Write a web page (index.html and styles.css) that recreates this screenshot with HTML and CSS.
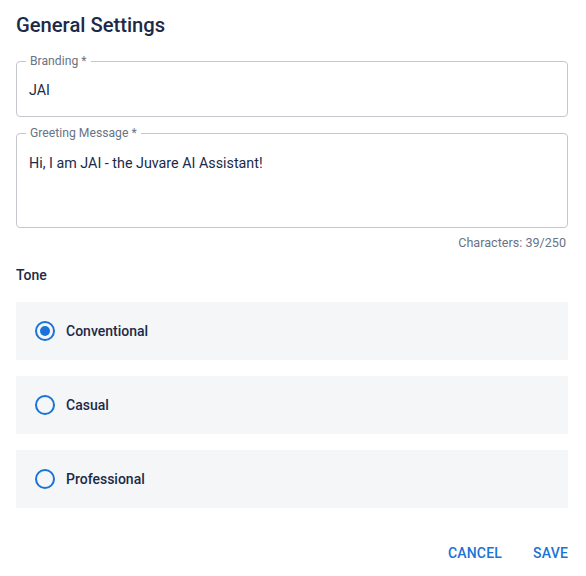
FILE: index.html
```html
<!DOCTYPE html>
<html>
<head>
<meta charset="utf-8">
<link rel="stylesheet" href="styles.css">
</head>
<body>
<div class="page">
  <h1 class="title">General Settings</h1>
  <fieldset class="field field-branding">
    <legend class="legend">Branding *</legend>
    <div class="value">JAI</div>
  </fieldset>
  <fieldset class="field field-greeting">
    <legend class="legend">Greeting Message *</legend>
    <div class="value">Hi, I am JAI - the Juvare AI Assistant!</div>
  </fieldset>
  <div class="counter">Characters: 39/250</div>
  <div class="tone-label">Tone</div>
  <div class="options">
    <div class="option"><span class="radio checked"></span><span class="opt-text">Conventional</span></div>
    <div class="option"><span class="radio"></span><span class="opt-text">Casual</span></div>
    <div class="option"><span class="radio"></span><span class="opt-text">Professional</span></div>
  </div>
  <div class="actions">
    <button class="btn">CANCEL</button>
    <button class="btn">SAVE</button>
  </div>
</div>
</body>
</html>
```
FILE: styles.css
```css
html, body { margin: 0; padding: 0; background: #fff; }
body { font-family: Roboto, "Noto Sans", sans-serif; color: #1c2a48; }
.page { padding: 13px 18px 0 16px; }
.title { margin: 0; font-size: 20.2px; font-weight: 500; line-height: 24px; color: #1c2a48; }
.field { margin: 0; padding: 0 12px; border: 1px solid #c4c7cc; border-radius: 4px; min-width: 0; box-sizing: border-box; }
.field-branding { margin-top: 17px; height: 63px; }
.field-greeting { margin-top: 9px; height: 102px; }
.legend { padding: 0 4px; margin-left: -3px; font-size: 12.2px; line-height: 14px; color: #6b7384; }
.value { font-size: 14.3px; line-height: 20px; color: #1c2a48; }
.field-branding .value { padding-top: 12px; }
.field-greeting .value { padding-top: 13px; }
.counter { text-align: right; font-size: 12.6px; color: #6b7384; margin-top: 8px; line-height: 14px; padding-right: 2px; }
.tone-label { margin-top: 16px; font-size: 14px; font-weight: 500; line-height: 18px; }
.options { margin-top: 18px; display: flex; flex-direction: column; gap: 16px; }
.option { height: 58px; background: #f5f6f8; display: flex; align-items: center; padding-left: 19px; }
.radio { width: 16px; height: 16px; border: 2px solid #1a73d8; border-radius: 50%; position: relative; flex: none; }
.radio.checked::after { content: ""; position: absolute; left: 3px; top: 3px; width: 10px; height: 10px; border-radius: 50%; background: #1a73d8; }
.opt-text { margin-left: 11px; font-size: 14px; font-weight: 500; color: #1c2a48; }
.actions { display: flex; justify-content: flex-end; gap: 31px; margin-top: 37px; }
.btn { background: none; border: none; padding: 0; font-family: Roboto, sans-serif; font-size: 14px; line-height: 16px; font-weight: 500; color: #1a73d8; letter-spacing: 0.2px; cursor: pointer; }
```
